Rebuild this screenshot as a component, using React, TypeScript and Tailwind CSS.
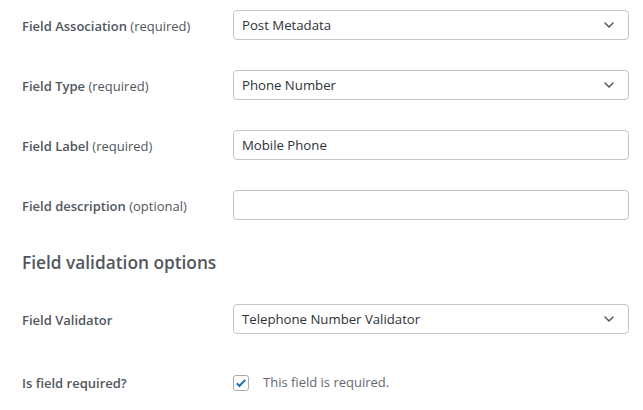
import React from 'react';

const Chevron = () => (
  <svg width="16" height="16" viewBox="0 0 20 20" className="absolute right-[11px] top-1/2 -translate-y-1/2 pointer-events-none">
    <path d="M5 7.5l5 5 5-5" fill="none" stroke="#50575e" strokeWidth="1.8" strokeLinecap="round" strokeLinejoin="round" />
  </svg>
);

interface RowProps {
  label: string;
  hint?: string;
  children: React.ReactNode;
  className?: string;
}

const Row: React.FC<RowProps> = ({ label, hint, children, className = '' }) => (
  <div className={`flex items-center ${className}`}>
    <div className="w-[211px] shrink-0 pt-[3px] text-[13px] text-[#50575e]">
      <span className="font-semibold">{label}</span>
      {hint && <span className="font-medium"> {hint}</span>}
    </div>
    <div className="flex-1">{children}</div>
  </div>
);

const Select = ({ value }: { value: string }) => (
  <div className="relative h-[30px] rounded-[4px] border border-[#c3c4c7] bg-white flex items-center pl-[8px] pt-[2px] text-[13.2px] text-[#2c3338]">
    {value}
    <Chevron />
  </div>
);

const TextInput = ({ value = '' }: { value?: string }) => (
  <div className="h-[30px] rounded-[4px] border border-[#c3c4c7] bg-white flex items-center pl-[8px] pt-[2px] text-[13.2px] text-[#2c3338]">
    {value}
  </div>
);

export default function App() {
  return (
    <div
      className="w-[643px] h-[410px] bg-white pl-[22px] pr-[14px] pt-[10px] overflow-hidden"
      style={{ fontFamily: '"Segoe UI", "Open Sans", "Noto Sans", sans-serif' }}
    >
      <Row label="Field Association" hint="(required)">
        <Select value="Post Metadata" />
      </Row>
      <Row label="Field Type" hint="(required)" className="mt-[30px]">
        <Select value="Phone Number" />
      </Row>
      <Row label="Field Label" hint="(required)" className="mt-[30px]">
        <TextInput value="Mobile Phone" />
      </Row>
      <Row label="Field description" hint="(optional)" className="mt-[30px]">
        <TextInput />
      </Row>

      <h2 className="mt-[31px] h-[24px] leading-[24px] text-[17.3px] font-semibold text-[#50575e]">
        Field validation options
      </h2>

      <Row label="Field Validator" className="mt-[29px]">
        <Select value="Telephone Number Validator" />
      </Row>

      <Row label="Is field required?" className="mt-[37px]">
        <label className="flex items-center gap-[14px] pt-[1px] text-[13px] text-[#646970]">
          <span className="w-[16px] h-[16px] rounded-[3px] border border-[#a7aaad] bg-white flex items-center justify-center">
            <svg width="14" height="14" viewBox="0 0 20 20">
              <path d="M4 10.5l3.8 3.8L16 5.5" fill="none" stroke="#2271b1" strokeWidth="3" />
            </svg>
          </span>
          This field is required.
        </label>
      </Row>
    </div>
  );
}
